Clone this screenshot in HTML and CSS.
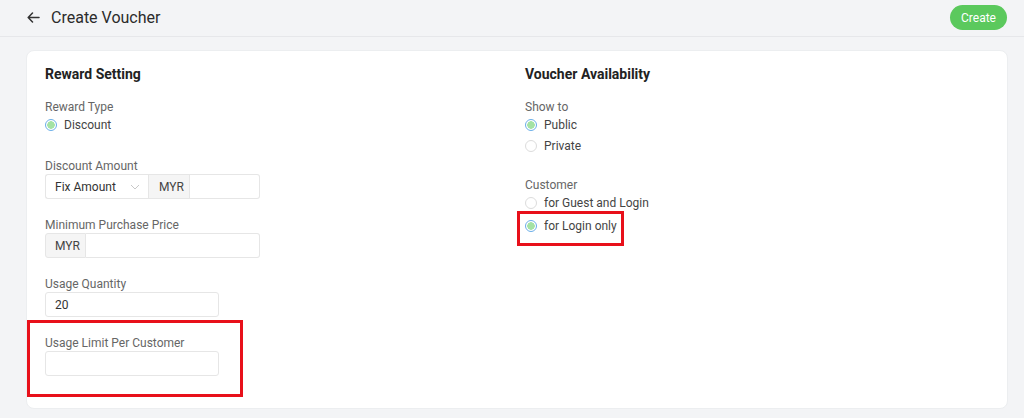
FILE: index.html
```html
<!DOCTYPE html>
<html>
<head>
<meta charset="utf-8">
<link rel="stylesheet" href="styles.css">
</head>
<body>
<header class="topbar">
  <div class="title-wrap">
    <svg class="back" width="13" height="11" viewBox="0 0 13 11"><path d="M12 5.5H1.5M5.5 1L1.2 5.5L5.5 10" fill="none" stroke="#333" stroke-width="1.5" stroke-linecap="round" stroke-linejoin="round"/></svg>
    <h1 class="title">Create Voucher</h1>
  </div>
  <button class="btn-create">Create</button>
</header>
<main class="main">
  <section class="card">
    <div class="col">
      <h2 class="heading">Reward Setting</h2>
      <div class="label">Reward Type</div>
      <div class="radios gap-lg">
        <div class="radio-row"><span class="radio checked"></span><span>Discount</span></div>
      </div>
      <div class="field">
        <div class="label">Discount Amount</div>
        <div class="group w215">
          <div class="select"><span>Fix Amount</span><svg width="10" height="6" viewBox="0 0 10 6"><path d="M1 1L5 5L9 1" fill="none" stroke="#c8c8c8" stroke-width="1"/></svg></div>
          <div class="addon">MYR</div>
          <div class="input grow"></div>
        </div>
      </div>
      <div class="field">
        <div class="label">Minimum Purchase Price</div>
        <div class="group w215">
          <div class="addon first">MYR</div>
          <div class="input grow"></div>
        </div>
      </div>
      <div class="field">
        <div class="label">Usage Quantity</div>
        <div class="input single">20</div>
      </div>
      <div class="field">
        <div class="label">Usage Limit Per Customer</div>
        <div class="input single"></div>
      </div>
    </div>
    <div class="col">
      <h2 class="heading">Voucher Availability</h2>
      <div class="label">Show to</div>
      <div class="radios gap-md">
        <div class="radio-row"><span class="radio checked"></span><span>Public</span></div>
        <div class="radio-row"><span class="radio"></span><span>Private</span></div>
      </div>
      <div class="label">Customer</div>
      <div class="radios">
        <div class="radio-row tight"><span class="radio"></span><span>for Guest and Login</span></div>
        <div class="radio-row"><span class="radio checked"></span><span>for Login only</span></div>
      </div>
    </div>
    <div class="mark mark-left"></div>
    <div class="mark mark-right"></div>
  </section>
</main>
</body>
</html>
```

FILE: styles.css
```css
* { box-sizing: border-box; }
html, body { margin: 0; padding: 0; }
body {
  background: #f3f4f6;
  font-family: Roboto, "Noto Sans", Arial, sans-serif;
  color: #333;
  width: 1024px;
  height: 418px;
  overflow: hidden;
}
.topbar {
  height: 37px;
  border-bottom: 1px solid #e6e7ea;
  display: flex;
  align-items: center;
  justify-content: space-between;
  padding: 0 17px 0 27px;
}
.title-wrap { display: flex; align-items: center; gap: 11px; }
.back { display: block; margin-top: -2px; }
.title {
  margin: 0;
  font-size: 16px;
  font-weight: 400;
  color: #2b2b2b;
  line-height: 20px;
}
.btn-create {
  border: 0;
  background: #5bc95d;
  color: #fff;
  font-family: inherit;
  font-size: 12px;
  height: 25px;
  width: 57px;
  border-radius: 13px;
  padding: 0;
  margin-top: -1px;
}
.main { padding: 13px 16px 0 26px; }
.card {
  position: relative;
  background: #fff;
  border: 1px solid #eceef0;
  border-radius: 8px;
  height: 359px;
  padding: 13px 18px 0 18px;
  display: grid;
  grid-template-columns: 480px 1fr;
}
.heading {
  margin: 0 0 15px 0;
  font-size: 14px;
  font-weight: 700;
  line-height: 20px;
  color: #222;
}
.label {
  font-size: 12px;
  line-height: 16px;
  color: #666;
}
.radios { display: flex; flex-direction: column; }
.gap-lg { margin-bottom: 22px; }
.gap-md { margin-bottom: 20px; }
.radio-row {
  display: flex;
  align-items: center;
  gap: 7px;
  height: 20px;
  font-size: 12px;
  color: #444;
  margin-bottom: 1px;
}
.radio-row.tight { margin-bottom: 3px; }
.radio {
  width: 12px;
  height: 12px;
  border-radius: 50%;
  border: 1px solid #dcdcdc;
  background: #fff;
  flex: none;
}
.radio.checked {
  border-color: #6aaee8;
  background: radial-gradient(circle, #a4e2a4 0 3.5px, #fff 4px);
}
.field { margin-bottom: 18px; }
.group {
  display: flex;
  height: 25px;
  font-size: 12px;
}
.w215 { width: 215px; }
.select {
  width: 103px;
  border: 1px solid #e6e6e6;
  border-right: 0;
  border-radius: 3px 0 0 3px;
  display: flex;
  align-items: center;
  justify-content: space-between;
  padding: 0 8px 0 9px;
  color: #333;
}
.addon {
  width: 42px;
  background: #f5f5f5;
  border: 1px solid #e6e6e6;
  display: flex;
  align-items: center;
  padding-left: 10px;
  color: #444;
}
.addon.first { width: 41px; border-radius: 3px 0 0 3px; padding-left: 9px; }
.input {
  border: 1px solid #e6e6e6;
  background: #fff;
  font-size: 12px;
  color: #333;
  display: flex;
  align-items: center;
  padding-left: 9px;
}
.input.grow { flex: 1; border-left: 0; border-radius: 0 3px 3px 0; }
.input.single { width: 174px; height: 25px; border-radius: 3px; }
.mark {
  position: absolute;
  border: 3px solid #e8101a;
}
.mark-left { left: 0; top: 269px; width: 216px; height: 77px; }
.mark-right { left: 490px; top: 160px; width: 107px; height: 35px; }
```
